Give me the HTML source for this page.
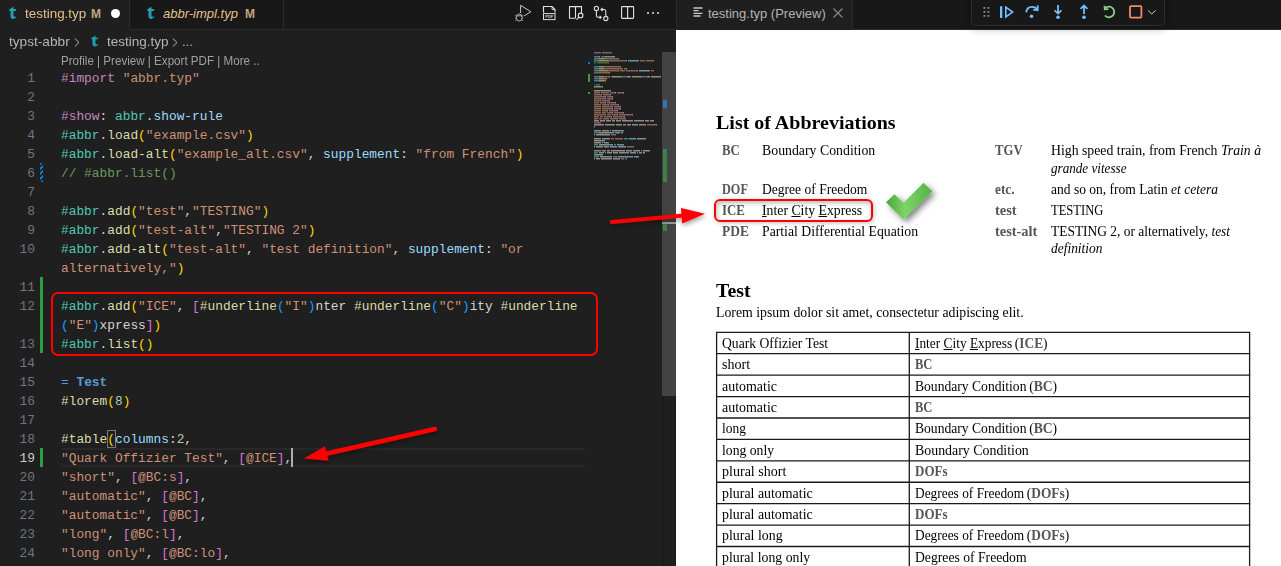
<!DOCTYPE html><html><head><meta charset="utf-8"><style>
*{margin:0;padding:0;box-sizing:border-box}
html,body{width:1281px;height:566px;overflow:hidden;background:#1f1f1f;position:relative}
body{font-family:"Liberation Sans",sans-serif}
.a{position:absolute}
.ui{position:absolute;font-family:"Liberation Sans",sans-serif;white-space:nowrap;line-height:0}
.code{position:absolute;left:61px;font-family:"Liberation Mono",monospace;font-size:12.85px;white-space:pre;line-height:19px;height:19px;color:#d4d4d4}
.ln{position:absolute;font-family:"Liberation Mono",monospace;font-size:12.85px;line-height:19px;height:19px;color:#6e7681;text-align:right;width:35px;left:0}
.k{color:#c586c0}.s{color:#ce9178}.t{color:#4ec9b0}.f{color:#dcdcaa}.v{color:#9cdcfe}.b1{color:#ffd700}.b2{color:#da70d6}.b3{color:#179fff}.c{color:#6a9955}.n{color:#b5cea8}.h{color:#569cd6}
.serif{position:absolute;font-family:"Liberation Serif",serif;white-space:nowrap;color:#111;line-height:0}
svg{position:absolute;overflow:visible}
</style></head><body><div class="a" style="left:0px;top:0px;width:676px;height:29px;background:#181818;"></div>
<div class="a" style="left:0px;top:29px;width:676px;height:1px;background:#2b2b2b;"></div>
<div class="a" style="left:0px;top:0px;width:129px;height:30px;background:#1f1f1f;"></div>
<div class="a" style="left:129px;top:0px;width:1px;height:30px;background:#2b2b2b;"></div>
<div class="a" style="left:283px;top:0px;width:1px;height:29px;background:#2b2b2b;"></div>
<svg style="left:0px;top:-0.20000000000000018px;" width="20" height="22" viewBox="0 0 20 22"><g transform="translate(0,0.00) scale(1,1.0)"><path d="M10.5 8.6 L13.5 6.7 L13.5 9.1 L16.1 9.1 L16.1 10.9 L13.5 10.9 L13.5 15.5 Q13.5 17 15 16.7 L16.6 16.2 Q15.8 18.9 13.1 18.9 Q10.5 18.9 10.5 15.9 L10.5 10.9 L9.4 10.9 L9.4 9.1 L10.5 9.1 Z" fill="#21a0b4"/></g></svg>
<div class="ui" style="left:25px;top:14.00px;font-size:13px;color:#e2c08d;transform-origin:0 0;transform:scaleX(1.034);">testing.typ</div>
<div class="ui" style="left:91px;top:14.34px;font-size:12px;color:#c3a57b;font-weight:bold">M</div>
<div class="a" style="left:111px;top:9px;width:9px;height:9px;background:#ffffff;border-radius:50%"></div>
<svg style="left:138px;top:-0.20000000000000018px;" width="20" height="22" viewBox="0 0 20 22"><g transform="translate(0,0.00) scale(1,1.0)"><path d="M10.5 8.6 L13.5 6.7 L13.5 9.1 L16.1 9.1 L16.1 10.9 L13.5 10.9 L13.5 15.5 Q13.5 17 15 16.7 L16.6 16.2 Q15.8 18.9 13.1 18.9 Q10.5 18.9 10.5 15.9 L10.5 10.9 L9.4 10.9 L9.4 9.1 L10.5 9.1 Z" fill="#21a0b4"/></g></svg>
<div class="ui" style="left:163px;top:14.00px;font-size:13px;color:#e2c08d;font-style:italic">abbr-impl.typ</div>
<div class="ui" style="left:245px;top:14.34px;font-size:12px;color:#c3a57b;font-weight:bold">M</div>
<svg style="left:512px;top:3px;" width="22" height="20" viewBox="0 0 22 20"><path d="M8.6 2.3 L8.6 10 M8.6 2.3 L18.8 8.7 L12 13" fill="none" stroke="#c5c5c5" stroke-width="1"/><ellipse cx="7.2" cy="14.5" rx="2.8" ry="3.6" fill="none" stroke="#b0b0b0" stroke-width="1"/><path d="M3.2 12.5 L4.4 13.2 M3.2 15 L4.4 15 M3.4 17.6 L4.6 16.7 M11.2 12.5 L10 13.2 M11.2 15 L10 15 M11 17.6 L9.8 16.7 M5 12.8 L9.4 12.8" stroke="#b0b0b0" stroke-width="1"/></svg>
<svg style="left:541px;top:3px;" width="18" height="20" viewBox="0 0 18 20"><path d="M2.5 9.5 L2.5 3.5 L11 3.5 L14 6.5 L14 9.5" fill="none" stroke="#e0e0e0" stroke-width="1.2"/><path d="M11 3.5 L11 6.5 L14 6.5" fill="none" stroke="#e0e0e0" stroke-width="0.8"/><rect x="2.5" y="10.6" width="11.5" height="6" fill="none" stroke="#e0e0e0" stroke-width="1"/><text x="8.25" y="15.4" font-family="Liberation Sans" font-size="4" font-weight="bold" text-anchor="middle" fill="#d0d0d0">PDF</text></svg>
<svg style="left:566px;top:3px;" width="20" height="20" viewBox="0 0 20 20"><path d="M15.5 10 L15.5 3.6 L3.5 3.6 L3.5 15.3 L9.5 15.3 M9.5 3.6 L9.5 15.3" fill="none" stroke="#e0e0e0" stroke-width="1.1"/><circle cx="14.6" cy="12.4" r="2.3" fill="#181818" stroke="#e0e0e0" stroke-width="1.1"/><path d="M13 14.2 L10.6 16.6" stroke="#e0e0e0" stroke-width="1.1"/></svg>
<svg style="left:592px;top:3px;" width="18" height="20" viewBox="0 0 18 20"><circle cx="4.4" cy="5.4" r="2.1" fill="none" stroke="#e0e0e0" stroke-width="1.1"/><circle cx="13.8" cy="15.5" r="2.1" fill="none" stroke="#e0e0e0" stroke-width="1.1"/><path d="M4.4 7.5 L4.4 12.5 Q4.4 14.3 6.2 14.3 L9 14.3 M7.6 12.8 L9.2 14.3 L7.6 15.8" fill="none" stroke="#e0e0e0" stroke-width="1.1"/><path d="M13.8 13.4 L13.8 8.3 Q13.8 6.5 12 6.5 L9 6.5 M10.6 5 L9 6.5 L10.6 8" fill="none" stroke="#e0e0e0" stroke-width="1.1"/></svg>
<svg style="left:618px;top:3px;" width="18" height="20" viewBox="0 0 18 20"><rect x="3.6" y="3.6" width="12" height="11.8" rx="0.6" fill="none" stroke="#e0e0e0" stroke-width="1.1"/><path d="M9.6 3.6 L9.6 15.4" stroke="#e0e0e0" stroke-width="1.1"/></svg>
<svg style="left:644px;top:3px;" width="18" height="20" viewBox="0 0 18 20"><circle cx="4" cy="10" r="1" fill="#e0e0e0"/><circle cx="9" cy="10" r="1" fill="#e0e0e0"/><circle cx="14" cy="10" r="1" fill="#e0e0e0"/></svg>
<div class="ui" style="left:9px;top:42.00px;font-size:13px;color:#b5b5b5;transform-origin:0 0;transform:scaleX(1.05);">typst-abbr</div>
<svg style="left:70px;top:35px;" width="12" height="14" viewBox="0 0 12 14"><path d="M4.8 3.5 L9 7.5 L4.8 11.5" fill="none" stroke="#b5b5b5" stroke-width="1"/></svg>
<svg style="left:82px;top:28.6px;" width="20" height="22" viewBox="0 0 20 22"><g transform="translate(0,0.77) scale(1,0.88)"><path d="M10.5 8.6 L13.5 6.7 L13.5 9.1 L16.1 9.1 L16.1 10.9 L13.5 10.9 L13.5 15.5 Q13.5 17 15 16.7 L16.6 16.2 Q15.8 18.9 13.1 18.9 Q10.5 18.9 10.5 15.9 L10.5 10.9 L9.4 10.9 L9.4 9.1 L10.5 9.1 Z" fill="#21a0b4"/></g></svg>
<div class="ui" style="left:107px;top:42.00px;font-size:13px;color:#b5b5b5;transform-origin:0 0;transform:scaleX(1.04);">testing.typ</div>
<svg style="left:168px;top:35px;" width="12" height="14" viewBox="0 0 12 14"><path d="M4.8 3.5 L9 7.5 L4.8 11.5" fill="none" stroke="#b5b5b5" stroke-width="1"/></svg>
<div class="ui" style="left:182px;top:42.00px;font-size:13px;color:#b5b5b5;">...</div>
<div class="ui" style="left:61px;top:61.34px;font-size:12px;color:#a0a0a0;transform-origin:0 0;transform:scaleX(0.967);">Profile | Preview | Export PDF | More ..</div>
<div class="a" style="left:61px;top:448px;width:524px;height:19px;border-top:2px solid #282828;border-bottom:2px solid #282828"></div>
<div class="a" style="left:106.8px;top:430px;width:9px;height:18px;border:1px solid #7a7a7a"></div>
<div class="ln" style="top:69px;color:#6e7681">1</div>
<div class="code" style="top:69px"><span class="k">#import</span> <span class="s">&quot;abbr.typ&quot;</span></div>
<div class="ln" style="top:88px;color:#6e7681">2</div>
<div class="ln" style="top:107px;color:#6e7681">3</div>
<div class="code" style="top:107px"><span class="k">#show</span>: <span class="t">abbr</span>.<span class="v">show-rule</span></div>
<div class="ln" style="top:126px;color:#6e7681">4</div>
<div class="code" style="top:126px"><span class="t">#abbr</span>.<span class="f">load</span><span class="b1">(</span><span class="s">&quot;example.csv&quot;</span><span class="b1">)</span></div>
<div class="ln" style="top:145px;color:#6e7681">5</div>
<div class="code" style="top:145px"><span class="t">#abbr</span>.<span class="f">load-alt</span><span class="b1">(</span><span class="s">&quot;example_alt.csv&quot;</span>, <span class="v">supplement</span>: <span class="s">&quot;from French&quot;</span><span class="b1">)</span></div>
<div class="ln" style="top:164px;color:#6e7681">6</div>
<div class="code" style="top:164px"><span class="c">// #abbr.list()</span></div>
<div class="ln" style="top:183px;color:#6e7681">7</div>
<div class="ln" style="top:202px;color:#6e7681">8</div>
<div class="code" style="top:202px"><span class="t">#abbr</span>.<span class="f">add</span><span class="b1">(</span><span class="s">&quot;test&quot;</span>,<span class="s">&quot;TESTING&quot;</span><span class="b1">)</span></div>
<div class="ln" style="top:221px;color:#6e7681">9</div>
<div class="code" style="top:221px"><span class="t">#abbr</span>.<span class="f">add</span><span class="b1">(</span><span class="s">&quot;test-alt&quot;</span>,<span class="s">&quot;TESTING 2&quot;</span><span class="b1">)</span></div>
<div class="ln" style="top:240px;color:#6e7681">10</div>
<div class="code" style="top:240px"><span class="t">#abbr</span>.<span class="f">add-alt</span><span class="b1">(</span><span class="s">&quot;test-alt&quot;</span>, <span class="s">&quot;test definition&quot;</span>, <span class="v">supplement</span>: <span class="s">&quot;or</span></div>
<div class="code" style="top:259px"><span class="s">alternatively,&quot;</span><span class="b1">)</span></div>
<div class="ln" style="top:278px;color:#6e7681">11</div>
<div class="ln" style="top:297px;color:#6e7681">12</div>
<div class="code" style="top:297px"><span class="t">#abbr</span>.<span class="f">add</span><span class="b1">(</span><span class="s">&quot;ICE&quot;</span>, <span class="b2">[</span><span class="f">#underline</span><span class="b3">(</span><span class="s">&quot;I&quot;</span><span class="b3">)</span>nter <span class="f">#underline</span><span class="b3">(</span><span class="s">&quot;C&quot;</span><span class="b3">)</span>ity <span class="f">#underline</span></div>
<div class="code" style="top:316px"><span class="b3">(</span><span class="s">&quot;E&quot;</span><span class="b3">)</span>xpress<span class="b2">]</span><span class="b1">)</span></div>
<div class="ln" style="top:335px;color:#6e7681">13</div>
<div class="code" style="top:335px"><span class="t">#abbr</span>.<span class="f">list</span><span class="b1">()</span></div>
<div class="ln" style="top:354px;color:#6e7681">14</div>
<div class="ln" style="top:373px;color:#6e7681">15</div>
<div class="code" style="top:373px"><span class="h">= </span><span class="h" style="font-weight:bold">Test</span></div>
<div class="ln" style="top:392px;color:#6e7681">16</div>
<div class="code" style="top:392px"><span class="f">#lorem</span><span class="b1">(</span><span class="n">8</span><span class="b1">)</span></div>
<div class="ln" style="top:411px;color:#6e7681">17</div>
<div class="ln" style="top:430px;color:#6e7681">18</div>
<div class="code" style="top:430px"><span class="f">#table</span><span class="b1">(</span><span class="v">columns</span>:<span class="n">2</span>,</div>
<div class="ln" style="top:449px;color:#cccccc">19</div>
<div class="code" style="top:449px"><span class="s">&quot;Quark Offizier Test&quot;</span>, <span class="b2">[</span><span class="s">@ICE</span><span class="b2">]</span>,</div>
<div class="ln" style="top:468px;color:#6e7681">20</div>
<div class="code" style="top:468px"><span class="s">&quot;short&quot;</span>, <span class="b2">[</span><span class="s">@BC:s</span><span class="b2">]</span>,</div>
<div class="ln" style="top:487px;color:#6e7681">21</div>
<div class="code" style="top:487px"><span class="s">&quot;automatic&quot;</span>, <span class="b2">[</span><span class="s">@BC</span><span class="b2">]</span>,</div>
<div class="ln" style="top:506px;color:#6e7681">22</div>
<div class="code" style="top:506px"><span class="s">&quot;automatic&quot;</span>, <span class="b2">[</span><span class="s">@BC</span><span class="b2">]</span>,</div>
<div class="ln" style="top:525px;color:#6e7681">23</div>
<div class="code" style="top:525px"><span class="s">&quot;long&quot;</span>, <span class="b2">[</span><span class="s">@BC:l</span><span class="b2">]</span>,</div>
<div class="ln" style="top:544px;color:#6e7681">24</div>
<div class="code" style="top:544px"><span class="s">&quot;long only&quot;</span>, <span class="b2">[</span><span class="s">@BC:lo</span><span class="b2">]</span>,</div>
<div class="a" style="left:291.3px;top:448px;width:2px;height:19px;background:#aeafad;"></div>
<div class="a" style="left:40px;top:163px;width:3px;height:19px;background:repeating-linear-gradient(-45deg,#0078d4 0 2px,transparent 2px 3.5px);"></div>
<div class="a" style="left:40px;top:277px;width:3px;height:76px;background:#2ea043;"></div>
<div class="a" style="left:40px;top:448px;width:3px;height:19px;background:#2ea043;"></div>
<svg style="left:0px;top:0px;" width="676" height="566" viewBox="0 0 676 566"><g opacity="0.6"><rect x="594" y="52" width="7" height="1.5" fill="#c586c0"/><rect x="602" y="52" width="10" height="1.5" fill="#ce9178"/><rect x="594" y="56" width="5" height="1.5" fill="#c586c0"/><rect x="599" y="56" width="1" height="1.5" fill="#d4d4d4"/><rect x="601" y="56" width="4" height="1.5" fill="#4ec9b0"/><rect x="605" y="56" width="1" height="1.5" fill="#d4d4d4"/><rect x="606" y="56" width="9" height="1.5" fill="#9cdcfe"/><rect x="594" y="58" width="5" height="1.5" fill="#4ec9b0"/><rect x="599" y="58" width="1" height="1.5" fill="#d4d4d4"/><rect x="600" y="58" width="4" height="1.5" fill="#dcdcaa"/><rect x="604" y="58" width="1" height="1.5" fill="#ffd700"/><rect x="605" y="58" width="13" height="1.5" fill="#ce9178"/><rect x="618" y="58" width="1" height="1.5" fill="#ffd700"/><rect x="594" y="60" width="5" height="1.5" fill="#4ec9b0"/><rect x="599" y="60" width="1" height="1.5" fill="#d4d4d4"/><rect x="600" y="60" width="8" height="1.5" fill="#dcdcaa"/><rect x="608" y="60" width="1" height="1.5" fill="#ffd700"/><rect x="609" y="60" width="17" height="1.5" fill="#ce9178"/><rect x="626" y="60" width="1" height="1.5" fill="#d4d4d4"/><rect x="628" y="60" width="10" height="1.5" fill="#9cdcfe"/><rect x="638" y="60" width="1" height="1.5" fill="#d4d4d4"/><rect x="640" y="60" width="5" height="1.5" fill="#ce9178"/><rect x="646" y="60" width="7" height="1.5" fill="#ce9178"/><rect x="653" y="60" width="1" height="1.5" fill="#ffd700"/><rect x="594" y="62" width="2" height="1.5" fill="#6a9955"/><rect x="597" y="62" width="12" height="1.5" fill="#6a9955"/><rect x="594" y="66" width="5" height="1.5" fill="#4ec9b0"/><rect x="599" y="66" width="1" height="1.5" fill="#d4d4d4"/><rect x="600" y="66" width="3" height="1.5" fill="#dcdcaa"/><rect x="603" y="66" width="1" height="1.5" fill="#ffd700"/><rect x="604" y="66" width="6" height="1.5" fill="#ce9178"/><rect x="610" y="66" width="1" height="1.5" fill="#d4d4d4"/><rect x="611" y="66" width="9" height="1.5" fill="#ce9178"/><rect x="620" y="66" width="1" height="1.5" fill="#ffd700"/><rect x="594" y="68" width="5" height="1.5" fill="#4ec9b0"/><rect x="599" y="68" width="1" height="1.5" fill="#d4d4d4"/><rect x="600" y="68" width="3" height="1.5" fill="#dcdcaa"/><rect x="603" y="68" width="1" height="1.5" fill="#ffd700"/><rect x="604" y="68" width="10" height="1.5" fill="#ce9178"/><rect x="614" y="68" width="1" height="1.5" fill="#d4d4d4"/><rect x="615" y="68" width="8" height="1.5" fill="#ce9178"/><rect x="624" y="68" width="2" height="1.5" fill="#ce9178"/><rect x="626" y="68" width="1" height="1.5" fill="#ffd700"/><rect x="594" y="70" width="5" height="1.5" fill="#4ec9b0"/><rect x="599" y="70" width="1" height="1.5" fill="#d4d4d4"/><rect x="600" y="70" width="7" height="1.5" fill="#dcdcaa"/><rect x="607" y="70" width="1" height="1.5" fill="#ffd700"/><rect x="608" y="70" width="10" height="1.5" fill="#ce9178"/><rect x="618" y="70" width="1" height="1.5" fill="#d4d4d4"/><rect x="620" y="70" width="5" height="1.5" fill="#ce9178"/><rect x="626" y="70" width="11" height="1.5" fill="#ce9178"/><rect x="637" y="70" width="1" height="1.5" fill="#d4d4d4"/><rect x="639" y="70" width="10" height="1.5" fill="#9cdcfe"/><rect x="649" y="70" width="1" height="1.5" fill="#d4d4d4"/><rect x="651" y="70" width="3" height="1.5" fill="#ce9178"/><rect x="594" y="72" width="15" height="1.5" fill="#ce9178"/><rect x="609" y="72" width="1" height="1.5" fill="#ffd700"/><rect x="594" y="76" width="5" height="1.5" fill="#4ec9b0"/><rect x="599" y="76" width="1" height="1.5" fill="#d4d4d4"/><rect x="600" y="76" width="3" height="1.5" fill="#dcdcaa"/><rect x="603" y="76" width="1" height="1.5" fill="#ffd700"/><rect x="604" y="76" width="5" height="1.5" fill="#ce9178"/><rect x="609" y="76" width="1" height="1.5" fill="#d4d4d4"/><rect x="611" y="76" width="1" height="1.5" fill="#da70d6"/><rect x="612" y="76" width="10" height="1.5" fill="#dcdcaa"/><rect x="622" y="76" width="1" height="1.5" fill="#179fff"/><rect x="623" y="76" width="3" height="1.5" fill="#ce9178"/><rect x="626" y="76" width="1" height="1.5" fill="#179fff"/><rect x="627" y="76" width="4" height="1.5" fill="#d4d4d4"/><rect x="632" y="76" width="10" height="1.5" fill="#dcdcaa"/><rect x="642" y="76" width="1" height="1.5" fill="#179fff"/><rect x="643" y="76" width="3" height="1.5" fill="#ce9178"/><rect x="646" y="76" width="1" height="1.5" fill="#179fff"/><rect x="647" y="76" width="3" height="1.5" fill="#d4d4d4"/><rect x="651" y="76" width="10" height="1.5" fill="#dcdcaa"/><rect x="594" y="78" width="1" height="1.5" fill="#179fff"/><rect x="595" y="78" width="3" height="1.5" fill="#ce9178"/><rect x="598" y="78" width="1" height="1.5" fill="#179fff"/><rect x="599" y="78" width="6" height="1.5" fill="#d4d4d4"/><rect x="605" y="78" width="1" height="1.5" fill="#da70d6"/><rect x="606" y="78" width="1" height="1.5" fill="#ffd700"/><rect x="594" y="80" width="5" height="1.5" fill="#4ec9b0"/><rect x="599" y="80" width="1" height="1.5" fill="#d4d4d4"/><rect x="600" y="80" width="4" height="1.5" fill="#dcdcaa"/><rect x="604" y="80" width="2" height="1.5" fill="#ffd700"/><rect x="594" y="84" width="1" height="1.5" fill="#569cd6"/><rect x="596" y="84" width="4" height="1.5" fill="#569cd6"/><rect x="594" y="86" width="6" height="1.5" fill="#dcdcaa"/><rect x="600" y="86" width="1" height="1.5" fill="#ffd700"/><rect x="601" y="86" width="1" height="1.5" fill="#b5cea8"/><rect x="602" y="86" width="1" height="1.5" fill="#ffd700"/><rect x="594" y="90" width="6" height="1.5" fill="#dcdcaa"/><rect x="600" y="90" width="1" height="1.5" fill="#ffd700"/><rect x="601" y="90" width="7" height="1.5" fill="#9cdcfe"/><rect x="608" y="90" width="1" height="1.5" fill="#d4d4d4"/><rect x="609" y="90" width="1" height="1.5" fill="#b5cea8"/><rect x="610" y="90" width="1" height="1.5" fill="#d4d4d4"/><rect x="594" y="92" width="6" height="1.5" fill="#ce9178"/><rect x="601" y="92" width="8" height="1.5" fill="#ce9178"/><rect x="610" y="92" width="5" height="1.5" fill="#ce9178"/><rect x="615" y="92" width="1" height="1.5" fill="#d4d4d4"/><rect x="617" y="92" width="1" height="1.5" fill="#da70d6"/><rect x="618" y="92" width="4" height="1.5" fill="#ce9178"/><rect x="622" y="92" width="1" height="1.5" fill="#da70d6"/><rect x="623" y="92" width="1" height="1.5" fill="#d4d4d4"/><rect x="594" y="94" width="7" height="1.5" fill="#ce9178"/><rect x="601" y="94" width="1" height="1.5" fill="#d4d4d4"/><rect x="603" y="94" width="1" height="1.5" fill="#da70d6"/><rect x="604" y="94" width="5" height="1.5" fill="#ce9178"/><rect x="609" y="94" width="1" height="1.5" fill="#da70d6"/><rect x="610" y="94" width="1" height="1.5" fill="#d4d4d4"/><rect x="594" y="96" width="11" height="1.5" fill="#ce9178"/><rect x="605" y="96" width="1" height="1.5" fill="#d4d4d4"/><rect x="607" y="96" width="1" height="1.5" fill="#da70d6"/><rect x="608" y="96" width="3" height="1.5" fill="#ce9178"/><rect x="611" y="96" width="1" height="1.5" fill="#da70d6"/><rect x="612" y="96" width="1" height="1.5" fill="#d4d4d4"/><rect x="594" y="98" width="11" height="1.5" fill="#ce9178"/><rect x="605" y="98" width="1" height="1.5" fill="#d4d4d4"/><rect x="607" y="98" width="1" height="1.5" fill="#da70d6"/><rect x="608" y="98" width="3" height="1.5" fill="#ce9178"/><rect x="611" y="98" width="1" height="1.5" fill="#da70d6"/><rect x="612" y="98" width="1" height="1.5" fill="#d4d4d4"/><rect x="594" y="100" width="6" height="1.5" fill="#ce9178"/><rect x="600" y="100" width="1" height="1.5" fill="#d4d4d4"/><rect x="602" y="100" width="1" height="1.5" fill="#da70d6"/><rect x="603" y="100" width="5" height="1.5" fill="#ce9178"/><rect x="608" y="100" width="1" height="1.5" fill="#da70d6"/><rect x="609" y="100" width="1" height="1.5" fill="#d4d4d4"/><rect x="594" y="102" width="5" height="1.5" fill="#ce9178"/><rect x="600" y="102" width="5" height="1.5" fill="#ce9178"/><rect x="605" y="102" width="1" height="1.5" fill="#d4d4d4"/><rect x="607" y="102" width="1" height="1.5" fill="#da70d6"/><rect x="608" y="102" width="6" height="1.5" fill="#ce9178"/><rect x="614" y="102" width="1" height="1.5" fill="#da70d6"/><rect x="615" y="102" width="1" height="1.5" fill="#d4d4d4"/><rect x="594" y="104" width="7" height="1.5" fill="#ce9178"/><rect x="602" y="104" width="6" height="1.5" fill="#ce9178"/><rect x="608" y="104" width="1" height="1.5" fill="#d4d4d4"/><rect x="610" y="104" width="1" height="1.5" fill="#da70d6"/><rect x="611" y="104" width="6" height="1.5" fill="#ce9178"/><rect x="617" y="104" width="1" height="1.5" fill="#da70d6"/><rect x="618" y="104" width="1" height="1.5" fill="#d4d4d4"/><rect x="594" y="106" width="7" height="1.5" fill="#ce9178"/><rect x="602" y="106" width="10" height="1.5" fill="#ce9178"/><rect x="612" y="106" width="1" height="1.5" fill="#d4d4d4"/><rect x="614" y="106" width="1" height="1.5" fill="#da70d6"/><rect x="615" y="106" width="4" height="1.5" fill="#ce9178"/><rect x="619" y="106" width="1" height="1.5" fill="#da70d6"/><rect x="620" y="106" width="1" height="1.5" fill="#d4d4d4"/><rect x="594" y="108" width="7" height="1.5" fill="#ce9178"/><rect x="602" y="108" width="10" height="1.5" fill="#ce9178"/><rect x="612" y="108" width="1" height="1.5" fill="#d4d4d4"/><rect x="614" y="108" width="1" height="1.5" fill="#da70d6"/><rect x="615" y="108" width="4" height="1.5" fill="#ce9178"/><rect x="619" y="108" width="1" height="1.5" fill="#da70d6"/><rect x="620" y="108" width="1" height="1.5" fill="#d4d4d4"/><rect x="594" y="110" width="7" height="1.5" fill="#ce9178"/><rect x="602" y="110" width="5" height="1.5" fill="#ce9178"/><rect x="607" y="110" width="1" height="1.5" fill="#d4d4d4"/><rect x="609" y="110" width="1" height="1.5" fill="#da70d6"/><rect x="610" y="110" width="6" height="1.5" fill="#ce9178"/><rect x="616" y="110" width="1" height="1.5" fill="#da70d6"/><rect x="617" y="110" width="1" height="1.5" fill="#d4d4d4"/><rect x="594" y="112" width="7" height="1.5" fill="#ce9178"/><rect x="602" y="112" width="4" height="1.5" fill="#ce9178"/><rect x="607" y="112" width="5" height="1.5" fill="#ce9178"/><rect x="612" y="112" width="1" height="1.5" fill="#d4d4d4"/><rect x="614" y="112" width="1" height="1.5" fill="#da70d6"/><rect x="615" y="112" width="7" height="1.5" fill="#ce9178"/><rect x="622" y="112" width="1" height="1.5" fill="#da70d6"/><rect x="623" y="112" width="1" height="1.5" fill="#d4d4d4"/><rect x="594" y="114" width="12" height="1.5" fill="#ce9178"/><rect x="607" y="114" width="4" height="1.5" fill="#ce9178"/><rect x="612" y="114" width="5" height="1.5" fill="#ce9178"/><rect x="617" y="114" width="1" height="1.5" fill="#d4d4d4"/><rect x="619" y="114" width="1" height="1.5" fill="#da70d6"/><rect x="620" y="114" width="11" height="1.5" fill="#ce9178"/><rect x="631" y="114" width="1" height="1.5" fill="#da70d6"/><rect x="632" y="114" width="1" height="1.5" fill="#d4d4d4"/><rect x="594" y="116" width="5" height="1.5" fill="#ce9178"/><rect x="600" y="116" width="3" height="1.5" fill="#ce9178"/><rect x="604" y="116" width="7" height="1.5" fill="#ce9178"/><rect x="611" y="116" width="1" height="1.5" fill="#d4d4d4"/><rect x="613" y="116" width="1" height="1.5" fill="#da70d6"/><rect x="614" y="116" width="9" height="1.5" fill="#ce9178"/><rect x="623" y="116" width="1" height="1.5" fill="#da70d6"/><rect x="624" y="116" width="1" height="1.5" fill="#d4d4d4"/><rect x="594" y="118" width="4" height="1.5" fill="#ce9178"/><rect x="599" y="118" width="3" height="1.5" fill="#ce9178"/><rect x="603" y="118" width="6" height="1.5" fill="#ce9178"/><rect x="610" y="118" width="7" height="1.5" fill="#ce9178"/><rect x="617" y="118" width="1" height="1.5" fill="#d4d4d4"/><rect x="619" y="118" width="1" height="1.5" fill="#da70d6"/><rect x="620" y="118" width="4" height="1.5" fill="#ce9178"/><rect x="624" y="118" width="1" height="1.5" fill="#da70d6"/><rect x="625" y="118" width="1" height="1.5" fill="#d4d4d4"/><rect x="594" y="120" width="5" height="1.5" fill="#d4d4d4"/><rect x="600" y="120" width="5" height="1.5" fill="#d4d4d4"/><rect x="606" y="120" width="5" height="1.5" fill="#d4d4d4"/><rect x="612" y="120" width="3" height="1.5" fill="#d4d4d4"/><rect x="616" y="120" width="5" height="1.5" fill="#d4d4d4"/><rect x="622" y="120" width="11" height="1.5" fill="#d4d4d4"/><rect x="634" y="120" width="10" height="1.5" fill="#d4d4d4"/><rect x="645" y="120" width="4" height="1.5" fill="#d4d4d4"/><rect x="650" y="120" width="4" height="1.5" fill="#d4d4d4"/><rect x="594" y="122" width="7" height="1.5" fill="#ce9178"/><rect x="594" y="124" width="10" height="1.5" fill="#d4d4d4"/><rect x="605" y="124" width="10" height="1.5" fill="#d4d4d4"/><rect x="616" y="124" width="6" height="1.5" fill="#d4d4d4"/><rect x="623" y="124" width="3" height="1.5" fill="#d4d4d4"/><rect x="627" y="124" width="4" height="1.5" fill="#d4d4d4"/><rect x="632" y="124" width="6" height="1.5" fill="#d4d4d4"/><rect x="639" y="124" width="7" height="1.5" fill="#d4d4d4"/><rect x="647" y="124" width="9" height="1.5" fill="#ce9178"/><rect x="656" y="124" width="1" height="1.5" fill="#d4d4d4"/><rect x="594" y="126" width="1" height="1.5" fill="#d4d4d4"/><rect x="594" y="130" width="7" height="1.5" fill="#d4d4d4"/><rect x="602" y="130" width="7" height="1.5" fill="#d4d4d4"/><rect x="610" y="130" width="1" height="1.5" fill="#d4d4d4"/><rect x="612" y="130" width="6" height="1.5" fill="#dcdcaa"/><rect x="618" y="130" width="6" height="1.5" fill="#9cdcfe"/><rect x="594" y="132" width="5" height="1.5" fill="#4ec9b0"/><rect x="599" y="132" width="9" height="1.5" fill="#dcdcaa"/><rect x="608" y="132" width="6" height="1.5" fill="#9cdcfe"/><rect x="615" y="132" width="4" height="1.5" fill="#9cdcfe"/><rect x="619" y="132" width="1" height="1.5" fill="#d4d4d4"/><rect x="621" y="132" width="2" height="1.5" fill="#d4d4d4"/><rect x="594" y="134" width="1" height="1.5" fill="#d4d4d4"/><rect x="596" y="134" width="14" height="1.5" fill="#d4d4d4"/><rect x="611" y="134" width="5" height="1.5" fill="#ce9178"/><rect x="594" y="138" width="7" height="1.5" fill="#d4d4d4"/><rect x="602" y="138" width="8" height="1.5" fill="#d4d4d4"/><rect x="611" y="138" width="3" height="1.5" fill="#ce9178"/><rect x="615" y="138" width="8" height="1.5" fill="#ce9178"/><rect x="624" y="138" width="4" height="1.5" fill="#4ec9b0"/><rect x="629" y="138" width="7" height="1.5" fill="#9cdcfe"/><rect x="637" y="138" width="9" height="1.5" fill="#d4d4d4"/><rect x="594" y="140" width="5" height="1.5" fill="#dcdcaa"/><rect x="599" y="140" width="6" height="1.5" fill="#9cdcfe"/><rect x="594" y="142" width="7" height="1.5" fill="#d4d4d4"/><rect x="602" y="142" width="1" height="1.5" fill="#d4d4d4"/><rect x="604" y="142" width="5" height="1.5" fill="#d4d4d4"/><rect x="594" y="144" width="4" height="1.5" fill="#4ec9b0"/><rect x="599" y="144" width="6" height="1.5" fill="#dcdcaa"/><rect x="605" y="144" width="8" height="1.5" fill="#9cdcfe"/><rect x="614" y="144" width="2" height="1.5" fill="#4ec9b0"/><rect x="617" y="144" width="7" height="1.5" fill="#9cdcfe"/><rect x="594" y="146" width="1" height="1.5" fill="#d4d4d4"/><rect x="596" y="146" width="7" height="1.5" fill="#d4d4d4"/><rect x="604" y="146" width="5" height="1.5" fill="#d4d4d4"/><rect x="610" y="146" width="7" height="1.5" fill="#d4d4d4"/><rect x="618" y="146" width="8" height="1.5" fill="#d4d4d4"/><rect x="627" y="146" width="7" height="1.5" fill="#ce9178"/><rect x="594" y="150" width="7" height="1.5" fill="#d4d4d4"/><rect x="602" y="150" width="4" height="1.5" fill="#d4d4d4"/><rect x="607" y="150" width="3" height="1.5" fill="#d4d4d4"/><rect x="611" y="150" width="14" height="1.5" fill="#d4d4d4"/><rect x="626" y="150" width="6" height="1.5" fill="#d4d4d4"/><rect x="633" y="150" width="7" height="1.5" fill="#d4d4d4"/><rect x="641" y="150" width="1" height="1.5" fill="#d4d4d4"/><rect x="643" y="150" width="7" height="1.5" fill="#d4d4d4"/><rect x="594" y="152" width="4" height="1.5" fill="#4ec9b0"/><rect x="599" y="152" width="5" height="1.5" fill="#9cdcfe"/><rect x="605" y="152" width="1" height="1.5" fill="#d4d4d4"/><rect x="607" y="152" width="5" height="1.5" fill="#d4d4d4"/><rect x="613" y="152" width="5" height="1.5" fill="#d4d4d4"/><rect x="619" y="152" width="5" height="1.5" fill="#dcdcaa"/><rect x="624" y="152" width="5" height="1.5" fill="#9cdcfe"/><rect x="630" y="152" width="6" height="1.5" fill="#d4d4d4"/><rect x="637" y="152" width="1" height="1.5" fill="#d4d4d4"/><rect x="639" y="152" width="3" height="1.5" fill="#d4d4d4"/><rect x="643" y="152" width="2" height="1.5" fill="#d4d4d4"/><rect x="594" y="154" width="9" height="1.5" fill="#d4d4d4"/><rect x="594" y="156" width="5" height="1.5" fill="#4ec9b0"/><rect x="600" y="156" width="5" height="1.5" fill="#dcdcaa"/><rect x="605" y="156" width="7" height="1.5" fill="#9cdcfe"/><rect x="613" y="156" width="3" height="1.5" fill="#c586c0"/><rect x="616" y="156" width="1" height="1.5" fill="#d4d4d4"/><rect x="618" y="156" width="14" height="1.5" fill="#9cdcfe"/><rect x="632" y="156" width="1" height="1.5" fill="#d4d4d4"/><rect x="634" y="156" width="5" height="1.5" fill="#9cdcfe"/><rect x="594" y="158" width="1" height="1.5" fill="#d4d4d4"/><rect x="596" y="158" width="4" height="1.5" fill="#d4d4d4"/><rect x="601" y="158" width="11" height="1.5" fill="#d4d4d4"/><rect x="613" y="158" width="7" height="1.5" fill="#d4d4d4"/><rect x="621" y="158" width="3" height="1.5" fill="#ce9178"/><rect x="625" y="158" width="2" height="1.5" fill="#ce9178"/></g></svg>
<div class="a" style="left:588px;top:62px;width:2px;height:2px;background:#0078d4;"></div>
<div class="a" style="left:588px;top:74px;width:2px;height:8px;background:#2ea043;"></div>
<div class="a" style="left:588px;top:92px;width:2px;height:2px;background:#2ea043;"></div>
<div class="a" style="left:662px;top:396px;width:1px;height:170px;background:#141414;"></div>
<div class="a" style="left:675px;top:396px;width:1px;height:170px;background:#181818;"></div>
<div class="a" style="left:662px;top:52px;width:14px;height:344px;background:#434343;"></div>
<div class="a" style="left:663px;top:100px;width:4px;height:8px;background:#2f7fc0;opacity:0.8"></div>
<div class="a" style="left:663px;top:149px;width:4px;height:33px;background:#3f8f4a;opacity:0.8"></div>
<div class="a" style="left:663px;top:223px;width:4px;height:8px;background:#3f8f4a;opacity:0.8"></div>
<div class="a" style="left:662px;top:222px;width:14px;height:2px;background:#a0a0a0;"></div>
<div class="a" style="left:676px;top:0px;width:1px;height:30px;background:#2b2b2b;"></div>
<div class="a" style="left:677px;top:0px;width:604px;height:29px;background:#181818;"></div>
<div class="a" style="left:677px;top:29px;width:604px;height:1px;background:#2b2b2b;"></div>
<div class="a" style="left:677px;top:0px;width:175px;height:30px;background:#1f1f1f;"></div>
<div class="a" style="left:852px;top:0px;width:1px;height:30px;background:#2b2b2b;"></div>
<svg style="left:690px;top:4px;" width="16" height="16" viewBox="0 0 16 16"><path d="M3.5 4 L12.5 4 M3.5 6.7 L8.5 6.7 M3.5 9.4 L12.5 9.4 M3.5 12 L10.5 12" stroke="#c8c8c8" stroke-width="1.3"/></svg>
<div class="ui" style="left:708px;top:14.00px;font-size:13px;color:#b4b4b4;">testing.typ (Preview)</div>
<svg style="left:830px;top:5px;" width="16" height="16" viewBox="0 0 16 16"><path d="M3.5 3.5 L12.5 12.5 M12.5 3.5 L3.5 12.5" stroke="#8b8b8b" stroke-width="1.1"/></svg>
<div class="a" style="left:676px;top:30px;width:605px;height:536px;background:#ffffff;"></div>
<div class="serif" id="h1" style="left:716.2px;top:123.39px;font-size:19px;font-weight:bold;font-style:normal;color:#000;transform-origin:0 0;transform:scaleX(1.0522)">List of Abbreviations</div>
<div class="serif" id="bc" style="left:722.1px;top:150.81px;font-size:13.6px;font-weight:bold;font-style:normal;color:#555;transform-origin:0 0;transform:scaleX(0.9476)">BC</div>
<div class="serif" id="bcd" style="left:761.9px;top:150.81px;font-size:13.6px;font-weight:normal;font-style:normal;color:#000;transform-origin:0 0;transform:scaleX(1.0170)">Boundary Condition</div>
<div class="serif" id="dof" style="left:722.1px;top:189.71px;font-size:13.6px;font-weight:bold;font-style:normal;color:#555;transform-origin:0 0;transform:scaleX(0.9023)">DOF</div>
<div class="serif" id="dofd" style="left:761.9px;top:189.71px;font-size:13.6px;font-weight:normal;font-style:normal;color:#000;transform-origin:0 0;transform:scaleX(0.9973)">Degree of Freedom</div>
<div class="serif" id="ice" style="left:722.1px;top:210.81px;font-size:13.6px;font-weight:bold;font-style:normal;color:#555;transform-origin:0 0;transform:scaleX(0.9468)">ICE</div>
<div class="serif" id="iced" style="left:761.9px;top:210.81px;font-size:13.6px;font-weight:normal;font-style:normal;color:#000;transform-origin:0 0;transform:scaleX(1.0114)"><u style="text-decoration-thickness:1px;text-underline-offset:1px">I</u>nter <u style="text-decoration-thickness:1px;text-underline-offset:1px">C</u>ity <u style="text-decoration-thickness:1px;text-underline-offset:1px">E</u>xpress</div>
<div class="serif" id="pde" style="left:722.1px;top:231.91px;font-size:13.6px;font-weight:bold;font-style:normal;color:#555;transform-origin:0 0;transform:scaleX(0.9894)">PDE</div>
<div class="serif" id="pded" style="left:761.9px;top:231.91px;font-size:13.6px;font-weight:normal;font-style:normal;color:#000;transform-origin:0 0;transform:scaleX(1.0102)">Partial Differential Equation</div>
<div class="serif" id="tgv" style="left:995.4px;top:150.81px;font-size:13.6px;font-weight:bold;font-style:normal;color:#555;transform-origin:0 0;transform:scaleX(0.9366)">TGV</div>
<div class="serif" id="tgvd" style="left:1050.9px;top:150.81px;font-size:13.6px;font-weight:normal;font-style:normal;color:#000;transform-origin:0 0;transform:scaleX(1.0135)">High speed train, from French <i>Train à</i></div>
<div class="serif" id="tgvd2" style="left:1050.9px;top:168.71px;font-size:13.6px;font-weight:normal;font-style:normal;color:#000;transform-origin:0 0;transform:scaleX(0.9660)"><i>grande vitesse</i></div>
<div class="serif" id="etc" style="left:995.4px;top:189.71px;font-size:13.6px;font-weight:bold;font-style:normal;color:#555;transform-origin:0 0;transform:scaleX(0.9800)">etc.</div>
<div class="serif" id="etcd" style="left:1050.9px;top:189.71px;font-size:13.6px;font-weight:normal;font-style:normal;color:#000;transform-origin:0 0;transform:scaleX(0.9940)">and so on, from Latin <i>et cetera</i></div>
<div class="serif" id="test" style="left:995.4px;top:210.81px;font-size:13.6px;font-weight:bold;font-style:normal;color:#555;transform-origin:0 0;transform:scaleX(1.0593)">test</div>
<div class="serif" id="testd" style="left:1050.9px;top:210.81px;font-size:13.6px;font-weight:normal;font-style:normal;color:#000;transform-origin:0 0;transform:scaleX(0.9251)">TESTING</div>
<div class="serif" id="testalt" style="left:995.4px;top:231.91px;font-size:13.6px;font-weight:bold;font-style:normal;color:#555;transform-origin:0 0;transform:scaleX(1.0571)">test-alt</div>
<div class="serif" id="testaltd" style="left:1050.9px;top:231.91px;font-size:13.6px;font-weight:normal;font-style:normal;color:#000;transform-origin:0 0;transform:scaleX(0.9890)">TESTING 2, or alternatively, <i>test</i></div>
<div class="serif" id="testaltd2" style="left:1050.9px;top:249.21px;font-size:13.6px;font-weight:normal;font-style:normal;color:#000;transform-origin:0 0;transform:scaleX(0.9883)"><i>definition</i></div>
<div class="serif" id="h2" style="left:716.1px;top:290.99px;font-size:19px;font-weight:bold;font-style:normal;color:#000;transform-origin:0 0;transform:scaleX(1.0455)">Test</div>
<div class="serif" id="lorem" style="left:716px;top:312.51px;font-size:13.6px;font-weight:normal;font-style:normal;color:#000;transform-origin:0 0;transform:scaleX(1.0147)">Lorem ipsum dolor sit amet, consectetur adipiscing elit.</div>
<svg style="left:0px;top:0px;" width="1281" height="566" viewBox="0 0 1281 566"><path d="M716.6 332.3 L716.6 566 M909.3 332.3 L909.3 566 M1249.6 332.3 L1249.6 566" stroke="#1a1a1a" stroke-width="1.3"/><path d="M716 332.30 L1250.2 332.30" stroke="#1a1a1a" stroke-width="1.3"/><path d="M716 353.72 L1250.2 353.72" stroke="#1a1a1a" stroke-width="1.3"/><path d="M716 375.14 L1250.2 375.14" stroke="#1a1a1a" stroke-width="1.3"/><path d="M716 396.56 L1250.2 396.56" stroke="#1a1a1a" stroke-width="1.3"/><path d="M716 417.98 L1250.2 417.98" stroke="#1a1a1a" stroke-width="1.3"/><path d="M716 439.40 L1250.2 439.40" stroke="#1a1a1a" stroke-width="1.3"/><path d="M716 460.82 L1250.2 460.82" stroke="#1a1a1a" stroke-width="1.3"/><path d="M716 482.24 L1250.2 482.24" stroke="#1a1a1a" stroke-width="1.3"/><path d="M716 503.66 L1250.2 503.66" stroke="#1a1a1a" stroke-width="1.3"/><path d="M716 525.08 L1250.2 525.08" stroke="#1a1a1a" stroke-width="1.3"/><path d="M716 546.50 L1250.2 546.50" stroke="#1a1a1a" stroke-width="1.3"/></svg>
<div class="serif" id="tl0" style="left:722.3px;top:343.71px;font-size:13.6px;font-weight:normal;font-style:normal;color:#000;transform-origin:0 0;transform:scaleX(1.0033)">Quark Offizier Test</div>
<div class="serif" id="tr0" style="left:915.2px;top:343.71px;font-size:13.6px;font-weight:normal;font-style:normal;color:#000;transform-origin:0 0;transform:scaleX(0.9820)"><u style="text-decoration-thickness:1px;text-underline-offset:1px">I</u>nter <u style="text-decoration-thickness:1px;text-underline-offset:1px">C</u>ity <u style="text-decoration-thickness:1px;text-underline-offset:1px">E</u>xpress&#8201;(<b style="color:#555">ICE</b>)</div>
<div class="serif" id="tl1" style="left:722.3px;top:365.13px;font-size:13.6px;font-weight:normal;font-style:normal;color:#000;transform-origin:0 0;transform:scaleX(1.0372)">short</div>
<div class="serif" id="tr1" style="left:915.2px;top:365.13px;font-size:13.6px;font-weight:normal;font-style:normal;color:#000;transform-origin:0 0;transform:scaleX(0.9211)"><b style="color:#555">BC</b></div>
<div class="serif" id="tl2" style="left:722.3px;top:386.55px;font-size:13.6px;font-weight:normal;font-style:normal;color:#000;transform-origin:0 0;transform:scaleX(1.0259)">automatic</div>
<div class="serif" id="tr2" style="left:915.2px;top:386.55px;font-size:13.6px;font-weight:normal;font-style:normal;color:#000;transform-origin:0 0;transform:scaleX(1.0003)">Boundary Condition&#8201;(<b style="color:#555">BC</b>)</div>
<div class="serif" id="tl3" style="left:722.3px;top:407.97px;font-size:13.6px;font-weight:normal;font-style:normal;color:#000;transform-origin:0 0;transform:scaleX(1.0259)">automatic</div>
<div class="serif" id="tr3" style="left:915.2px;top:407.97px;font-size:13.6px;font-weight:normal;font-style:normal;color:#000;transform-origin:0 0;transform:scaleX(0.9211)"><b style="color:#555">BC</b></div>
<div class="serif" id="tl4" style="left:722.3px;top:429.39px;font-size:13.6px;font-weight:normal;font-style:normal;color:#000;transform-origin:0 0;transform:scaleX(0.9929)">long</div>
<div class="serif" id="tr4" style="left:915.2px;top:429.39px;font-size:13.6px;font-weight:normal;font-style:normal;color:#000;transform-origin:0 0;transform:scaleX(1.0003)">Boundary Condition&#8201;(<b style="color:#555">BC</b>)</div>
<div class="serif" id="tl5" style="left:722.3px;top:450.81px;font-size:13.6px;font-weight:normal;font-style:normal;color:#000;transform-origin:0 0;transform:scaleX(1.0071)">long only</div>
<div class="serif" id="tr5" style="left:915.2px;top:450.81px;font-size:13.6px;font-weight:normal;font-style:normal;color:#000;transform-origin:0 0;transform:scaleX(1.0215)">Boundary Condition</div>
<div class="serif" id="tl6" style="left:722.3px;top:472.23px;font-size:13.6px;font-weight:normal;font-style:normal;color:#000;transform-origin:0 0;transform:scaleX(1.0338)">plural short</div>
<div class="serif" id="tr6" style="left:915.2px;top:472.23px;font-size:13.6px;font-weight:normal;font-style:normal;color:#000;transform-origin:0 0;transform:scaleX(0.9593)"><b style="color:#555">DOFs</b></div>
<div class="serif" id="tl7" style="left:722.3px;top:493.65px;font-size:13.6px;font-weight:normal;font-style:normal;color:#000;transform-origin:0 0;transform:scaleX(1.0223)">plural automatic</div>
<div class="serif" id="tr7" style="left:915.2px;top:493.65px;font-size:13.6px;font-weight:normal;font-style:normal;color:#000;transform-origin:0 0;transform:scaleX(0.9837)">Degrees of Freedom&#8201;(<b style="color:#555">DOFs</b>)</div>
<div class="serif" id="tl8" style="left:722.3px;top:515.07px;font-size:13.6px;font-weight:normal;font-style:normal;color:#000;transform-origin:0 0;transform:scaleX(1.0223)">plural automatic</div>
<div class="serif" id="tr8" style="left:915.2px;top:515.07px;font-size:13.6px;font-weight:normal;font-style:normal;color:#000;transform-origin:0 0;transform:scaleX(0.9593)"><b style="color:#555">DOFs</b></div>
<div class="serif" id="tl9" style="left:722.3px;top:536.49px;font-size:13.6px;font-weight:normal;font-style:normal;color:#000;transform-origin:0 0;transform:scaleX(1.0222)">plural long</div>
<div class="serif" id="tr9" style="left:915.2px;top:536.49px;font-size:13.6px;font-weight:normal;font-style:normal;color:#000;transform-origin:0 0;transform:scaleX(0.9837)">Degrees of Freedom&#8201;(<b style="color:#555">DOFs</b>)</div>
<div class="serif" id="tl10" style="left:722.3px;top:557.91px;font-size:13.6px;font-weight:normal;font-style:normal;color:#000;transform-origin:0 0;transform:scaleX(1.0156)">plural long only</div>
<div class="serif" id="tr10" style="left:915.2px;top:557.91px;font-size:13.6px;font-weight:normal;font-style:normal;color:#000;transform-origin:0 0;transform:scaleX(1.0055)">Degrees of Freedom</div>
<div class="a" style="left:713.5px;top:198.8px;width:159.5px;height:23px;border:2px solid #f00;border-radius:6px;box-shadow:inset 1px 2px 5px rgba(0,0,0,0.28),1px 1px 4px rgba(0,0,0,0.25)"></div>
<div class="a" style="left:51px;top:292px;width:547px;height:63.5px;border:2px solid #f00;border-radius:7px"></div>
<svg style="left:876px;top:175px;" width="70" height="55" viewBox="0 0 70 55"><defs><linearGradient id="cg" x1="0" y1="0" x2="1" y2="0"><stop offset="0" stop-color="#4aa63a"/><stop offset="0.42" stop-color="#7fd468"/><stop offset="1" stop-color="#55b043"/></linearGradient><filter id="sh" x="-30%" y="-30%" width="160%" height="160%"><feGaussianBlur in="SourceAlpha" stdDeviation="3"/><feOffset dx="2.5" dy="2.5"/><feComponentTransfer><feFuncA type="linear" slope="0.5"/></feComponentTransfer><feMerge><feMergeNode/><feMergeNode in="SourceGraphic"/></feMerge></filter></defs><path d="M10 27.3 L18.5 19.2 L27.5 27.8 L47.6 7.7 L56.1 16.2 L27.5 44.6 Z" fill="url(#cg)" filter="url(#sh)"/></svg>
<svg style="left:600px;top:195px;" width="120" height="40" viewBox="0 0 120 40"><defs><filter id="ash" x="-20%" y="-60%" width="140%" height="220%"><feGaussianBlur in="SourceAlpha" stdDeviation="2.8"/><feOffset dx="1" dy="1.5"/><feComponentTransfer><feFuncA type="linear" slope="0.42"/></feComponentTransfer><feMerge><feMergeNode/><feMergeNode in="SourceGraphic"/></feMerge></filter></defs><g filter="url(#ash)"><path d="M12 27 L84 20.5" stroke="#f00" stroke-width="4.2" stroke-linecap="round"/><path d="M81 13 L105 18.7 L82.2 28.5 Z" fill="#f00"/></g></svg>
<svg style="left:295px;top:420px;" width="150" height="50" viewBox="0 0 150 50"><defs><filter id="ash2" x="-20%" y="-60%" width="140%" height="220%"><feGaussianBlur in="SourceAlpha" stdDeviation="2.8"/><feOffset dx="1" dy="1.5"/><feComponentTransfer><feFuncA type="linear" slope="0.42"/></feComponentTransfer><feMerge><feMergeNode/><feMergeNode in="SourceGraphic"/></feMerge></filter></defs><g filter="url(#ash2)"><path d="M140 9 L30 34" stroke="#f00" stroke-width="4.5" stroke-linecap="round"/><path d="M30 26.2 L8.9 38.5 L33.5 40.8 Z" fill="#f00"/></g></svg>
<div class="a" style="left:971px;top:-6px;width:194px;height:32px;background:#181818;border:1px solid #2e2e2e;border-radius:4px;box-shadow:0 2px 8px rgba(0,0,0,0.36)"></div>
<svg style="left:980px;top:4px;" width="14" height="16" viewBox="0 0 14 16"><rect x="3.4" y="3" width="2" height="1.8" fill="#858585"/><rect x="3.4" y="7" width="2" height="1.8" fill="#858585"/><rect x="3.4" y="11" width="2" height="1.8" fill="#858585"/><rect x="7.4" y="3" width="2" height="1.8" fill="#858585"/><rect x="7.4" y="7" width="2" height="1.8" fill="#858585"/><rect x="7.4" y="11" width="2" height="1.8" fill="#858585"/></svg>
<svg style="left:996px;top:4px;" width="20" height="16" viewBox="0 0 20 16"><rect x="4" y="2.2" width="2.3" height="11.8" fill="#75beff"/><path d="M9.8 3.2 L16.6 8.1 L9.8 13 Z" fill="none" stroke="#75beff" stroke-width="1.6" stroke-linejoin="miter"/></svg>
<svg style="left:1022px;top:2px;" width="20" height="18" viewBox="0 0 20 18"><path d="M4.2 10.3 Q4.8 4.8 10 4.8 Q13.6 4.8 15.2 7.6" fill="none" stroke="#75beff" stroke-width="1.8"/><path d="M15.8 3.4 L15.6 8.2 L11.2 7.6" fill="none" stroke="#75beff" stroke-width="1.8"/><circle cx="9.5" cy="14.3" r="1.8" fill="#75beff"/></svg>
<svg style="left:1048px;top:2px;" width="20" height="18" viewBox="0 0 20 18"><path d="M10 3 L10 11.5 M6.6 8.3 L10 11.6 L13.4 8.3" fill="none" stroke="#75beff" stroke-width="1.8"/><circle cx="10" cy="15.2" r="1.8" fill="#75beff"/></svg>
<svg style="left:1074px;top:2px;" width="20" height="18" viewBox="0 0 20 18"><path d="M10 12 L10 3.6 M6.6 6.8 L10 3.4 L13.4 6.8" fill="none" stroke="#75beff" stroke-width="1.8"/><circle cx="10" cy="15.2" r="1.8" fill="#75beff"/></svg>
<svg style="left:1100px;top:2px;" width="20" height="20" viewBox="0 0 20 20"><path d="M5.2 6.2 A5.3 5.3 0 1 1 4.9 13.5" fill="none" stroke="#89d185" stroke-width="1.8"/><path d="M4.5 3.8 L4.8 7.4 L8.4 7.2" fill="none" stroke="#89d185" stroke-width="1.8"/></svg>
<svg style="left:1126px;top:2px;" width="20" height="20" viewBox="0 0 20 20"><rect x="4" y="4.2" width="11.4" height="11.4" rx="1" fill="none" stroke="#f48771" stroke-width="1.8"/></svg>
<svg style="left:1145px;top:2px;" width="14" height="20" viewBox="0 0 14 20"><path d="M3 8.4 L6.8 12 L10.6 8.4" fill="none" stroke="#cccccc" stroke-width="1"/></svg></body></html>
